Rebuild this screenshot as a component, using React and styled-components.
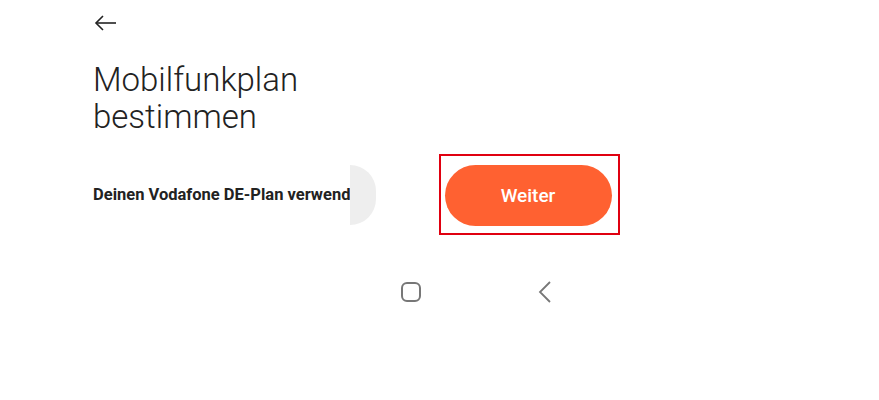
import React from 'react';
import styled, { createGlobalStyle } from 'styled-components';

const Global = createGlobalStyle`
  html, body {
    margin: 0;
    padding: 0;
    background: #fff;
    font-family: Roboto, "Liberation Sans", sans-serif;
  }
`;

const App = () => {
    return (
        <Page>
            <Global />
            <Header>
                <BackButton aria-label="Zurück">
                    <svg width="24" height="16" viewBox="0 0 24 16" fill="none" stroke="#222" strokeWidth="1.6">
                        <path d="M22 8H2" />
                        <path d="M9 1L2 8l7 7" />
                    </svg>
                </BackButton>
            </Header>

            <Title>Mobilfunkplan<br />bestimmen</Title>

            <PlanRow>
                <PlanText>Deinen Vodafone DE-Plan verwenden</PlanText>
                <HalfCircle />
                <Highlight>
                    <NextButton>Weiter</NextButton>
                </Highlight>
            </PlanRow>

            <NavBar>
                <svg width="22" height="22" viewBox="0 0 22 22" fill="none" stroke="#777" strokeWidth="2">
                    <rect x="2" y="2" width="18" height="18" rx="5" />
                </svg>
                <svg width="14" height="22" viewBox="0 0 14 22" fill="none" stroke="#777" strokeWidth="1.8">
                    <path d="M12 1L2 11l10 10" />
                </svg>
            </NavBar>
        </Page>
    );
};

const Page = styled.div`
  width: 879px;
  height: 400px;
  padding-left: 93px;
  box-sizing: border-box;
  overflow: hidden;
`;

const Header = styled.div`
  height: 46px;
  display: flex;
  align-items: center;
`;

const BackButton = styled.div`
  display: flex;
  margin-left: 1px;
`;

const Title = styled.h1`
  margin: 15px 0 0;
  font-size: 33px;
  font-weight: 300;
  line-height: 37px;
  color: #222;
`;

const PlanRow = styled.div`
  display: flex;
  align-items: center;
  margin-top: 19px;
`;

const PlanText = styled.div`
  width: 257px;
  white-space: nowrap;
  overflow: hidden;
  font-size: 16.5px;
  font-weight: 700;
  color: #222;
`;

const HalfCircle = styled.div`
  width: 26px;
  height: 60px;
  border-radius: 0 30px 30px 0;
  background: #eeeeee;
`;

const Highlight = styled.div`
  margin-left: 63px;
  width: 177px;
  height: 77px;
  border: 2px solid #e00010;
  display: flex;
  align-items: center;
  justify-content: center;
`;

const NextButton = styled.button`
  width: 167px;
  height: 61px;
  border: none;
  border-radius: 31px;
  background: #ff6131;
  color: #fff;
  font-family: Roboto, "Liberation Sans", sans-serif;
  font-size: 19px;
  font-weight: 500;
  margin-left: -3px;
  margin-top: 1px;
`;

const NavBar = styled.div`
  display: flex;
  align-items: center;
  gap: 116px;
  margin-top: 46px;
  margin-left: 307px;
`;

export default App;
